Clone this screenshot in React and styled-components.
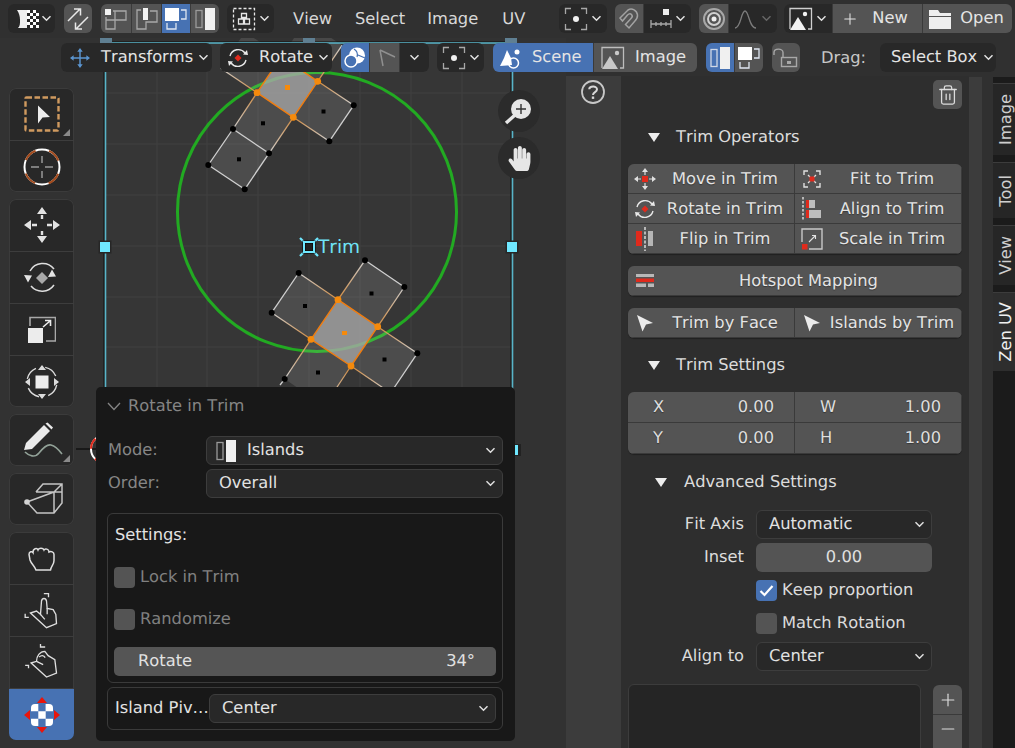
import styled, { createGlobalStyle } from 'styled-components';
import { Trash2, Plus, Minus } from 'lucide-react';
import { FaHandPaper } from 'react-icons/fa';

const Global = createGlobalStyle`
  html, body { margin: 0; padding: 0; background: #303030; }
  * { box-sizing: border-box; }
`;

const Root = styled.div`
  position: relative;
  width: 1015px;
  height: 748px;
  overflow: hidden;
  background: #303030;
  color: #e2e2e2;
  font-family: "DejaVu Sans", sans-serif;
  font-size: 16.3px;
  line-height: 1;
  text-rendering: geometricPrecision;
  font-kerning: none;
`;

const TopBar = styled.div`
  display: flex;
  align-items: flex-start;
  height: 38px;
  padding: 4px 0 0 8px;
  background: #303030;
`;

const SecondBar = styled.div`
  position: absolute;
  top: 43px;
  left: 61px;
  display: flex;
  align-items: flex-start;
  height: 29px;
  z-index: 3;
`;

const SegGroup = styled.div`
  display: flex;
  flex: none;
  height: 29px;
  margin-left: ${(p) => p.$ml || 0}px;
  border-radius: 6px;
  overflow: hidden;
  box-shadow: inset 0 0 0 1px rgba(70, 70, 70, 0.35);
`;

const toneColor = { dark: '#282828', gray: '#545454', blue: '#4772b3' };

const Seg = styled.div`
  display: flex;
  flex: none;
  align-items: center;
  justify-content: ${(p) => (p.$pl ? 'flex-start' : 'center')};
  gap: ${(p) => p.$gap || 0}px;
  width: ${(p) => p.$w}px;
  padding-left: ${(p) => p.$pl || 0}px;
  background: ${(p) => toneColor[p.$tone || 'dark']};
  color: #e4e4e4;
  & + & { border-left: 1px solid #3a3a3a; }
`;

const SegLabel = styled.span`
  margin-right: ${(p) => p.$mr || 0}px;
`;

const MenuItem = styled.span`
  flex: none;
  margin-left: ${(p) => p.$ml}px;
  padding-top: 7px;
  color: #d8d8d8;
`;

const DragLabel = styled.span`
  flex: none;
  margin: 7px 14px 0 21px;
  color: #c8c8c8;
`;

const Workspace = styled.div`
  display: flex;
  height: 710px;
`;

const Viewport = styled.div`
  position: relative;
  flex: none;
  width: 566px;
  background: #323232;
`;

const Canvas = styled.svg`
  position: absolute;
  inset: 0;
`;

const TrimLabel = styled.span`
  position: absolute;
  left: 318px;
  top: 201px;
  color: #6fe3f7;
  font-size: 18.5px;
`;

const NavGizmo = styled.div`
  position: absolute;
  left: 498px;
  top: ${(p) => p.$top}px;
  width: 42px;
  height: 42px;
  display: flex;
  align-items: center;
  justify-content: center;
  border-radius: 50%;
  background: #2b2b2b;
  color: #e6e6e6;
`;

const Toolbar = styled.div`
  position: absolute;
  left: 9px;
  top: 50px;
  display: flex;
  flex-direction: column;
  gap: 7px;
  width: 65px;
`;

const ToolGroup = styled.div`
  border-radius: 7px;
  overflow: hidden;
  background: #282828;
  box-shadow: inset 0 0 0 1px #3b3b3b;
`;

const ToolCell = styled.div`
  position: relative;
  display: flex;
  align-items: center;
  justify-content: center;
  height: 52px;
  background: ${(p) => (p.$active ? '#4772b3' : 'transparent')};
  & + & { border-top: 1px solid #3d3d3d; }
`;

const CornerMark = styled.span`
  position: absolute;
  right: 4px;
  bottom: 4px;
  width: 0;
  height: 0;
  border-left: 7px solid transparent;
  border-bottom: 7px solid #8a8a8a;
`;

const RedoPanel = styled.div`
  position: absolute;
  left: 96px;
  top: 349px;
  width: 419px;
  height: 354px;
  padding: 0 12px 0 11px;
  border-radius: 5px;
  background: #181818;
  z-index: 2;
`;

const RedoTitle = styled.div`
  display: flex;
  align-items: center;
  gap: 7px;
  height: 37px;
  padding-top: 1px;
  margin-bottom: 12px;
  color: #858585;
`;

const RedoRow = styled.div`
  display: flex;
  align-items: center;
  height: 29px;
  margin-bottom: 4px;
`;

const RedoLabel = styled.span`
  flex: none;
  width: 99px;
  padding-left: 1px;
  color: #868686;
`;

const SelectField = styled.div`
  display: flex;
  align-items: center;
  justify-content: space-between;
  flex: ${(p) => (p.$w ? 'none' : 1)};
  width: ${(p) => (p.$w ? `${p.$w}px` : 'auto')};
  height: 29px;
  padding: 0 6px 0 12px;
  border: 1px solid #3d3d3d;
  border-radius: 6px;
  background: #282828;
  color: #e2e2e2;
`;

const FieldValue = styled.span`
  display: flex;
  align-items: center;
  gap: 9px;
  margin-left: -5px;
`;

const BoxPanel = styled.div`
  margin-top: ${(p) => p.$mt || 0}px;
  padding: ${(p) => p.$pad};
  border: 1px solid #3a3a3a;
  border-radius: 6px;
`;

const BoxTitle = styled.div`
  height: 20px;
  margin: 0 0 22px 1px;
  padding-top: 2px;
`;

const CheckRow = styled.div`
  display: flex;
  align-items: center;
  gap: 5px;
  height: 21px;
  margin-bottom: ${(p) => p.$mb || 0}px;
  color: ${(p) => (p.$dim ? '#808080' : '#dcdcdc')};
`;

const CheckBox = styled.span`
  display: flex;
  align-items: center;
  justify-content: center;
  flex: none;
  width: 21px;
  height: 21px;
  border-radius: 4px;
  background: ${(p) => (p.$on ? '#4772b3' : '#545454')};
`;

const Slider = styled.div`
  display: flex;
  align-items: center;
  justify-content: space-between;
  height: 29px;
  padding: 0 21px 0 24px;
  border-radius: 5px;
  background: #555555;
  color: #e2e2e2;
`;

const PivotRow = styled.div`
  display: flex;
  align-items: center;
  justify-content: space-between;
`;

const HelpColumn = styled.div`
  flex: none;
  width: 55px;
  margin-top: 38px;
  padding: 3px 0 0 14px;
  background: #3c3c3c;
`;

const SidePanel = styled.div`
  flex: none;
  width: 348px;
  margin-top: 38px;
  padding: 4px 7px 0;
  background: #2e2e2e;
  overflow: hidden;
`;

const ScrollStrip = styled.div`
  flex: none;
  width: 13px;
  margin-top: 39px;
  background: #3c3c3c;
`;

const Gutter = styled.div`
  flex: none;
  width: 11px;
`;

const TabColumn = styled.div`
  flex: none;
  width: 22px;
  margin-top: 39px;
  padding-top: 6px;
  background: #1b1b1b;
`;

const Tab = styled.div`
  display: flex;
  align-items: center;
  justify-content: center;
  height: ${(p) => p.$h}px;
  margin-bottom: 7px;
  padding-left: 5px;
  border-top: 1px solid #3c3c3c;
  background: ${(p) => (p.$active ? '#2e2e2e' : '#262626')};
  color: ${(p) => (p.$active ? '#f0f0f0' : '#cfcfcf')};
  & > span {
    writing-mode: vertical-rl;
    transform: rotate(180deg);
  }
`;

const TrashRow = styled.div`
  display: flex;
  justify-content: flex-end;
  height: 29px;
`;

const SquareButton = styled.div`
  display: flex;
  align-items: center;
  justify-content: center;
  width: 29px;
  height: 29px;
  border-radius: 5px;
  background: #545454;
  color: #dcdcdc;
`;

const SectionHeader = styled.div`
  display: flex;
  align-items: center;
  gap: ${(p) => p.$gap || 15}px;
  height: 30px;
  margin-top: ${(p) => p.$mt}px;
  padding: 2px 0 0 ${(p) => p.$pl}px;
  color: #dcdcdc;
`;

const Triangle = styled.span`
  width: 0;
  height: 0;
  border-left: 6.5px solid transparent;
  border-right: 6.5px solid transparent;
  border-top: 9px solid #ededed;
`;

const ButtonGrid = styled.div`
  display: grid;
  grid-template-columns: ${(p) => (p.$single ? '1fr' : '167px 167px')};
  margin-top: ${(p) => p.$mt}px;
  border-radius: 6px;
  overflow: hidden;
  background: #3a3a3a;
  box-shadow: 0 1px 1px rgba(0, 0, 0, 0.3);
`;

const OpButton = styled.div`
  display: flex;
  align-items: center;
  height: 30px;
  padding: 0 2px 0 5px;
  background: #545454;
  color: #e4e4e4;
  text-shadow: 0 1px 1px rgba(0, 0, 0, 0.35);
  box-shadow: inset -1px -1px 0 #3a3a3a;
`;

const OpIcon = styled.span`
  display: flex;
  flex: none;
  align-items: center;
  justify-content: center;
  width: 24px;
`;

const OpText = styled.span`
  flex: 1;
  text-align: center;
`;

const NumberCell = styled.div`
  display: flex;
  align-items: center;
  justify-content: space-between;
  height: 31px;
  padding: 0 21px 0 25px;
  background: #545454;
  color: #dedede;
  text-shadow: 0 1px 1px rgba(0, 0, 0, 0.35);
  box-shadow: inset -1px -1px 0 #3a3a3a;
`;

const PropRow = styled.div`
  display: grid;
  grid-template-columns: 116px 176px;
  column-gap: 12px;
  align-items: center;
  margin-top: ${(p) => p.$mt}px;
  min-height: 20px;
`;

const PropLabel = styled.span`
  text-align: right;
  color: #dcdcdc;
`;

const NumberField = styled.div`
  height: 29px;
  line-height: 27px;
  border-radius: 6px;
  background: #545454;
  color: #e0e0e0;
  text-align: center;
`;

const ListArea = styled.div`
  display: flex;
  justify-content: space-between;
  margin-top: 13px;
`;

const ListBox = styled.div`
  width: 293px;
  height: 90px;
  border: 1px solid #3c3c3c;
  border-radius: 6px;
  background: #252525;
`;

const StackButtons = styled.div`
  width: 29px;
  margin-top: 1px;
  border-radius: 6px;
  overflow: hidden;
  background: #545454;
  color: #dcdcdc;
  & > div {
    display: flex;
    align-items: center;
    justify-content: center;
    height: 29px;
  }
  & > div + div { border-top: 1px solid #3a3a3a; }
`;

const W = '#e8e8e8';
const G = '#a8a8a8';
const R = '#e02a1c';

const Ico = ({ w = 24, h = 24, children }) => (
  <svg width={w} height={h} viewBox={`0 0 ${w} ${h}`} fill="none">{children}</svg>
);

const Chev = ({ c = '#e0e0e0' }) => (
  <svg width="11" height="7" viewBox="0 0 11 7" fill="none">
    <path d="M1.5 1.2l4 4 4-4" stroke={c} strokeWidth="1.5" />
  </svg>
);

const TitleChev = () => (
  <svg width="14" height="9" viewBox="0 0 14 9" fill="none">
    <path d="M1 1l6 6.5L13 1" stroke="#858585" strokeWidth="1.3" />
  </svg>
);

const checker = (x0, y0, size, n, m) => {
  const out = [];
  for (let i = 0; i < n; i++) {
    for (let j = 0; j < m; j++) {
      if ((i + j) % 2 === 0) out.push(<rect key={`${i}-${j}`} x={x0 + i * size} y={y0 + j * size} width={size} height={size} fill="#fff" />);
    }
  }
  return out;
};

const EditorIcon = () => (
  <Ico w={24} h={24}>
    <path d="M2 3h10v18H3c2-2 2-4 2-8s-1-7-3-10z" fill="#f0f0f0" />
    {checker(12, 3, 3, 4, 6)}
  </Ico>
);

const SyncIcon = () => (
  <Ico w={26} h={26}>
    <path d="M3 15L15 3M9 3h6.5v6.5M23 11L11 23M17 23h-6.5v-6.5" stroke={W} strokeWidth="1.5" />
  </Ico>
);

const VertMode = () => (
  <Ico w={24} h={24}>
    <rect x="1" y="2" width="6" height="6" fill="#f2f2f2" />
    <path d="M9 4h13v9H11v9H2V10M11 4v9H2" stroke={G} strokeWidth="1.3" />
  </Ico>
);
const EdgeMode = () => (
  <Ico w={24} h={24}>
    <rect x="8" y="1" width="5" height="12" fill="#f2f2f2" />
    <path d="M6 3H2v19h9v-7h11V4h-7" stroke={G} strokeWidth="1.3" />
  </Ico>
);
const FaceMode = () => (
  <Ico w={24} h={24}>
    <rect x="1" y="1" width="14" height="13" fill="#fff" />
    <path d="M17 3h5v9h-5M3 16v6h9v-6" stroke="#dfe6f2" strokeWidth="1.3" />
  </Ico>
);
const IslandMode = ({ gray }) => (
  <Ico w={24} h={24}>
    <rect x="3" y="3.5" width="6" height="17" stroke={gray ? '#9a9a9a' : '#d0d8e6'} strokeWidth="1.3" />
    <rect x="12" y="1" width="10" height="22" fill="#f0f0f0" />
  </Ico>
);

const StickyIcon = () => (
  <Ico w={24} h={24}>
    <rect x="1.5" y="1.5" width="21" height="21" stroke={W} strokeWidth="1.3" strokeDasharray="3 2" />
    <path d="M9.5 6.5h5v4h-5zM6.5 12h5v5h-5zM12.5 12h5v5h-5z" stroke={W} strokeWidth="1.3" />
  </Ico>
);

const PivotIcon = () => (
  <Ico w={24} h={24}>
    <path d="M1.5 7V1.5H7M17 1.5h5.5V7M22.5 17v5.5H17M7 22.5H1.5V17" stroke={G} strokeWidth="1.3" />
    <circle cx="12" cy="12" r="3" fill="#f0f0f0" />
  </Ico>
);

const MagnetIcon = () => (
  <Ico w={24} h={24}>
    <path d="M3 11l8-8c4-2.5 9 .5 9.5 5 .3 3-1.5 5-3 6.5L12 21l-3.5-3.5 5.5-6c1.5-1.5 1.5-3 .5-4s-2.5-1-4 .5l-5 6z" stroke="#a2a2a2" strokeWidth="1.5" />
  </Ico>
);

const IncrementIcon = () => (
  <Ico w={24} h={24}>
    <rect x="14" y="2" width="6" height="6" fill="#eee" />
    <path d="M2 13v8M22 13v8M2 17h20M7 15v4M12 15v4M17 15v4" stroke={G} strokeWidth="1.3" />
  </Ico>
);

const PropIcon = () => (
  <Ico w={24} h={24}>
    <circle cx="12" cy="12" r="10" stroke={G} strokeWidth="2" />
    <circle cx="12" cy="12" r="6" stroke="#cfcfcf" strokeWidth="2" />
    <circle cx="12" cy="12" r="2.5" fill="#eee" />
  </Ico>
);

const FalloffIcon = () => (
  <Ico w={24} h={24}>
    <path d="M1 21c6 0 6-17 10-17s4 17 11 17" stroke="#7c7c7c" strokeWidth="1.3" />
  </Ico>
);

const ImageIcon = ({ c = '#f2f2f2', frame = '#cfcfcf' }) => (
  <Ico w={24} h={24}>
    <path d="M1 22V1.5h21.5V22H19" stroke={frame} strokeWidth="1.3" />
    <path d="M1 23l8-13 8 13z" fill={c} />
    <circle cx="16" cy="7" r="2.2" fill={c} />
  </Ico>
);

const FolderIcon = () => (
  <Ico w={24} h={24}>
    <path d="M1 3h9l2 3h11v3H1z" fill="#eee" />
    <rect x="1" y="10" width="22" height="12" fill="#eee" />
  </Ico>
);

const TransformsIcon = () => (
  <svg width="20" height="20" viewBox="0 0 22 22" fill="none">
    <path d="M11 2v18M2 11h18" stroke="#5b95d0" strokeWidth="1.6" />
    <path d="M11 0l3 4H8zM11 22l3-4H8zM0 11l4-3v6zM22 11l-4-3v6z" fill="#5b95d0" />
  </svg>
);

const RotateTool = () => (
  <Ico w={24} h={24}>
    <path d="M4 10a8.5 8.5 0 0 1 15-3M20 14a8.5 8.5 0 0 1-15 3" stroke={W} strokeWidth="1.4" />
    <path d="M17 8.5l5 .5-1-5zM7 15.5l-5-.5 1 5z" fill={W} />
    <path d="M12 8.5l3.5 3.5-3.5 3.5L8.5 12z" fill={R} />
  </Ico>
);

const UvSyncIcon = () => (
  <Ico w={24} h={24}>
    <circle cx="14" cy="9.5" r="8" fill="#fff" />
    <path d="M11 3c3 2 4 5 3 8M15 9l7 3" stroke="#4772b3" strokeWidth="1.2" />
    <circle cx="8" cy="15" r="6" stroke="#fff" strokeWidth="1.5" fill="#4772b3" />
  </Ico>
);

const DimArrow = () => (
  <Ico w={22} h={22}>
    <path d="M6 3l3 16M6 3l15 7" stroke="#8f8f8f" strokeWidth="1.5" />
  </Ico>
);

const SceneIcon = () => (
  <Ico w={24} h={24}>
    <path d="M1 20l4-8 3-8 4 8 1 7z" fill="#fff" />
    <circle cx="18" cy="6" r="2.5" fill="#fff" />
    <circle cx="14.5" cy="17" r="5" stroke="#fff" strokeWidth="1.5" />
  </Ico>
);

const LockIcon = () => (
  <Ico w={26} h={24}>
    <path d="M1 9V6.5C1 2 10 2 10 6.5V11" stroke={G} strokeWidth="1.4" />
    <rect x="8.5" y="11.5" width="15" height="9" stroke={G} strokeWidth="1.4" />
    <rect x="14" y="15" width="4" height="3" fill={G} />
  </Ico>
);

const SelectBoxTool = () => (
  <Ico w={36} h={36}>
    <rect x="1.5" y="1.5" width="33" height="33" rx="1" stroke="#d09a5f" strokeWidth="2.4" strokeDasharray="5.5 2.5" />
    <path d="M14 9.5v18l4.5-6 7.5-.5z" fill="#ececec" />
  </Ico>
);

const CursorTool = () => (
  <Ico w={38} h={38}>
    <circle cx="19" cy="19" r="17.5" stroke="#fff" strokeWidth="2" />
    <circle cx="19" cy="19" r="17.5" stroke="#a34a1c" strokeWidth="2" strokeDasharray="13.7 13.7" strokeDashoffset="20.5" />
    <path d="M19 8v7M19 23v7M8 19h8M22 19h8" stroke="#999" strokeWidth="1.5" />
  </Ico>
);

const MoveTool = () => (
  <Ico w={38} h={38}>
    <path d="M19 1l5 7H14zM19 37l5-7H14zM1 19l7-5v10zM37 19l-7-5v10z" fill="#e2e2e2" />
    <path d="M19 9v4M19 25v4M9 19h5M24 19h5" stroke="#e2e2e2" strokeWidth="2.4" />
  </Ico>
);

const RotateBigTool = () => (
  <Ico w={38} h={38}>
    <path d="M7 12A14.5 14.5 0 0 1 31 10M31 26A14.5 14.5 0 0 1 8 27" stroke="#dedede" strokeWidth="1.5" />
    <path d="M25 18l8-.5-4-7zM1 16l8 .5-4 7z" fill="#e4e4e4" />
    <path d="M19 13l6 6-6 6-6-6z" fill="#a8a8a8" />
  </Ico>
);

const ScaleTool = () => (
  <Ico w={28} h={28}>
    <path d="M2 10V1.5h25.5V25H18" stroke="#a8a8a8" strokeWidth="1.6" />
    <rect x="0" y="12" width="15" height="15" fill="#ececec" />
    <path d="M15 11l7-6M17 4.5h5.5V10" stroke="#ececec" strokeWidth="1.6" />
  </Ico>
);

const TransformTool = () => (
  <Ico w={36} h={36}>
    <rect x="11.5" y="11.5" width="13" height="13" fill="#ececec" />
    <path d="M18 1l4 5h-8zM18 35l4-5h-8zM1 18l5-4v8zM35 18l-5-4v8z" fill="#dcdcdc" />
    <circle cx="18" cy="18" r="15" stroke="#dcdcdc" strokeWidth="1.4" strokeDasharray="14 9.5" strokeDashoffset="-3" />
  </Ico>
);

const AnnotateTool = () => (
  <Ico w={42} h={36}>
    <path d="M3 28l2-7L23 3l6 6-18 18z" fill="#eaeaea" />
    <path d="M24.5 1.5l2-1 5.5 5-1.5 2z" fill="#eaeaea" />
    <path d="M4 30c4 4 10 6 14 1s8-9 12-8 8 5 11 9" stroke="#92a298" strokeWidth="1.6" />
  </Ico>
);

const BoxTool = () => (
  <Ico w={44} h={36}>
    <path d="M16 11l7-8h19v19l-8 10H17L7 21M16 11h26M34 11v21M34 11l8-8M7 21l27-10" stroke="#c4c4c4" strokeWidth="1.5" />
    <circle cx="7" cy="21" r="2.8" fill="#d4d4d4" />
  </Ico>
);

const FistTool = () => (
  <Ico w={30} h={30}>
    <path d="M2 11.5c0-3 3-3.500 4-2 0-4 4-5 5-2.500 1-2.500 5-2.500 6 0 1-2 5-1 5 2 2-1 5 0 5 2.500v6c0 4-2.500 5-3.500 9.500H9C8 23.500 4 20.500 3 17z" stroke="#dedede" strokeWidth="1.5" />
  </Ico>
);

const PinchTool = () => (
  <svg width="37" height="40" viewBox="60 570 110 120" fill="none" stroke="#dedede" strokeWidth="4">
    <path d="M82 636l18-6 12 10 3-40c2-10 13-10 15 0l2 22 18 4 8 14 2 28-30 12z" />
    <path d="M112 640l13 15M132 622v18" />
    <path d="M122 578h14v11M66 638v11h11" />
  </svg>
);

const PinchAltTool = () => (
  <svg width="37" height="40" viewBox="60 730 110 120" fill="none" stroke="#dedede" strokeWidth="4">
    <path d="M84 790l16-5c0-15 10-30 25-30l10 13 20 12 5 40-30 12z" />
    <path d="M100 785l20 10M108 772c6-6 14-6 18 2" />
    <path d="M112 733v9h14M66 797h10v9" />
  </svg>
);

const GizmoTool = () => (
  <Ico w={40} h={40}>
    <path d="M20 2l5 6H15zM20 38l5-6H15zM2 20l6-5v10zM38 20l-6-5v10z" fill="#e8150c" />
    <rect x="9" y="9" width="22" height="22" rx="4" fill="#fff" />
    <path d="M16.300 9h7.300v7.300h-7.300zM9 16.300h7.300v7.400H9zM23.700 16.300H31v7.400h-7.300zM16.300 23.700h7.300V31h-7.300z" fill="#4772b3" />
  </Ico>
);

const ZoomGizmo = () => (
  <Ico w={30} h={30}>
    <circle cx="17" cy="13" r="10" fill="#e6e6e6" />
    <path d="M2 27l9-8" stroke="#e6e6e6" strokeWidth="3.4" />
    <path d="M17 8v10M12 13h10" stroke="#333" strokeWidth="1.4" />
  </Ico>
);

const OpMove = () => (
  <Ico w={22} h={22}>
    <path d="M11 0l3 4H8zM11 22l3-4H8zM0 11l4-3v6zM22 11l-4-3v6z" fill="#e0e0e0" />
    <path d="M11 4v3M11 15v3M4 11h3M15 11h3" stroke="#e0e0e0" strokeWidth="1.2" />
    <rect x="8" y="8" width="6" height="6" fill={R} />
  </Ico>
);
const OpFit = () => (
  <Ico w={18} h={18}>
    <path d="M1 5V1h4M17 5V1h-4M1 13v4h4M17 13v4h-4" stroke="#e0e0e0" strokeWidth="1.4" />
    <path d="M5 5l2 2M13 5l-2 2M5 13l2-2M13 13l-2-2" stroke="#e0e0e0" strokeWidth="1.2" />
    <rect x="6.500" y="6.500" width="5" height="5" fill={R} />
  </Ico>
);
const OpAlign = () => (
  <Ico w={22} h={24}>
    <path d="M2 0v24" stroke="#eee" strokeWidth="1.3" strokeDasharray="2.5 1.5" />
    <rect x="5" y="3" width="3" height="8" fill={R} />
    <rect x="8" y="3" width="6" height="8" fill="#bdbdbd" />
    <rect x="5" y="13" width="3" height="8" fill={R} />
    <rect x="8" y="13" width="12" height="8" fill="#bdbdbd" />
  </Ico>
);
const OpFlip = () => (
  <Ico w={20} h={24}>
    <rect x="1" y="4" width="6" height="15" fill={R} />
    <path d="M10 0v24" stroke="#eee" strokeWidth="1.3" strokeDasharray="3 1.5" />
    <rect x="13" y="4" width="5" height="15" fill="#b5b5b5" />
  </Ico>
);
const OpScale = () => (
  <Ico w={22} h={22}>
    <path d="M1 14V1h20v20H8" stroke="#c8c8c8" strokeWidth="1.4" />
    <rect x="1" y="16" width="5.500" height="5.500" fill={R} />
    <path d="M8 14l6-6M11 7.500h3.500V11" stroke="#e0e0e0" strokeWidth="1.1" />
  </Ico>
);
const OpHotspot = () => (
  <Ico w={20} h={16}>
    <rect x="1" y="1" width="18" height="3" fill="#b8b8b8" />
    <rect x="1" y="5.500" width="18" height="3.500" fill={R} />
    <rect x="1" y="10.500" width="10" height="3.500" fill="#b8b8b8" />
    <rect x="13" y="10.500" width="6" height="3.500" fill="#b8b8b8" />
  </Ico>
);
const OpArrow = () => (
  <Ico w={20} h={20}>
    <path d="M2 2l16 8-7 1.500-3.500 7z" fill="#ececec" />
  </Ico>
);

const HelpIcon = () => (
  <Ico w={26} h={26}>
    <circle cx="13" cy="13" r="11" stroke="#c8c8c8" strokeWidth="1.8" />
    <path d="M9.200 10.300C9.400 6.800 17 6.600 17 10.300c0 3-4 2.600-4 5.700" stroke="#d8d8d8" strokeWidth="2" />
    <rect x="11.800" y="17.500" width="2.400" height="2.400" fill="#d8d8d8" />
  </Ico>
);

const V = {
  o1: [257, 92.7], o2: [317.7, 81.3], o3: [293.3, 117.3], o4: [281.4, 56.7],
  b1: [353.7, 105.3], b2: [329.3, 141.3], b3: [233, 129], b4: [269, 153.3],
  b5: [208.3, 165], b6: [244.7, 189.3], t1: [220.7, 68.2], t2: [342, 45.3],
  t3: [245, 32], t4: [305.8, 20.7],
  p1: [338, 299.7], p2: [377.7, 326.7], p3: [351, 366], p4: [311, 339.3],
  a1: [404.3, 287], a2: [365, 260.3], c1: [271.7, 312.7], c2: [298.7, 273],
  d1: [417.3, 353.3], d2: [390.6, 393], e1: [284.7, 379], e2: [324.5, 406],
  f2: [280, 385],
};

const FACES = [
  ['o1', 'o3', 'b4', 'b3'], ['o2', 'b1', 'b2', 'o3'], ['b3', 'b4', 'b6', 'b5'],
  ['o1', 'o4', 't3', 't1'], ['o2', 't2', 't4', 'o4'],
  ['p1', 'a2', 'a1', 'p2'], ['p1', 'p4', 'c1', 'c2'], ['p2', 'd1', 'd2', 'p3'], ['p4', 'p3', 'e2', 'e1'],
];
const SEL_FACES = [['o1', 'o3', 'o2', 'o4'], ['p1', 'p2', 'p3', 'p4']];

const SEL_EDGES = [['o1', 'o3'], ['o3', 'o2'], ['o2', 'o4'], ['o4', 'o1'], ['p1', 'p2'], ['p2', 'p3'], ['p3', 'p4'], ['p4', 'p1']];
const HALF_EDGES = [
  ['o1', 'b3'], ['o3', 'b4'], ['o3', 'b2'], ['o2', 'b1'], ['o1', 't1'], ['o2', 't2'],
  ['p1', 'a2'], ['p2', 'a1'], ['p1', 'c2'], ['p4', 'c1'], ['p2', 'd1'], ['p3', 'd2'], ['p4', 'e1'], ['p3', 'e2'],
];
const PLAIN_EDGES = [
  ['b1', 'b2'], ['b3', 'b4'], ['b3', 'b5'], ['b5', 'b6'], ['b6', 'b4'],
  ['a2', 'a1'], ['c1', 'c2'], ['d1', 'd2'], ['e1', 'f2'],
];
const BLACK_VERTS = ['b1', 'b2', 'b3', 'b4', 'b5', 'b6', 'a1', 'a2', 'c1', 'c2', 'd1', 'e1'];
const ORANGE_VERTS = ['o1', 'o2', 'o3', 'p1', 'p2', 'p3', 'p4'];
const DOTS = [[263, 123.3], [323.5, 111.5], [239, 159.3], [305, 306], [371.5, 293.5], [384.5, 359.5], [318, 372.5]];
const GRID_X = [157, 207, 258, 309, 360, 411, 462];
const GRID_Y = [93, 144, 195, 246, 297, 347];

const pts = (f) => f.map((k) => V[k].join(',')).join(' ');

const UvCanvas = () => (
  <Canvas width="566" height="710" viewBox="0 38 566 710">
    <defs>
      {HALF_EDGES.map(([a, b]) => (
        <linearGradient key={a + b} id={`g-${a}-${b}`} gradientUnits="userSpaceOnUse" x1={V[a][0]} y1={V[a][1]} x2={V[b][0]} y2={V[b][1]}>
          <stop offset="0" stopColor="#d08a40" />
          <stop offset="1" stopColor="#d0d0d0" />
        </linearGradient>
      ))}
    </defs>
    <rect x="105" y="42" width="407" height="420" fill="#363636" />
    {GRID_X.map((x) => <line key={x} x1={x} x2={x} y1="42" y2="450" stroke="#414141" strokeWidth="1" />)}
    {GRID_Y.map((y) => <line key={y} x1="105" x2="512" y1={y} y2={y} stroke="#414141" strokeWidth="1" />)}
    <circle cx="317" cy="212" r="139.5" stroke="#22aa22" strokeWidth="3" fill="none" />
    {FACES.map((f) => <polygon key={f.join()} points={pts(f)} fill="rgba(255,255,255,0.11)" />)}
    {SEL_FACES.map((f) => <polygon key={f.join()} points={pts(f)} fill="rgba(170,170,170,0.78)" />)}
    {PLAIN_EDGES.map(([a, b]) => <line key={a + b} x1={V[a][0]} y1={V[a][1]} x2={V[b][0]} y2={V[b][1]} stroke="#d0d0d0" strokeWidth="1.3" />)}
    {HALF_EDGES.map(([a, b]) => <line key={a + b} x1={V[a][0]} y1={V[a][1]} x2={V[b][0]} y2={V[b][1]} stroke={`url(#g-${a}-${b})`} strokeWidth="1.3" />)}
    {SEL_EDGES.map(([a, b]) => <line key={a + b} x1={V[a][0]} y1={V[a][1]} x2={V[b][0]} y2={V[b][1]} stroke="#f07d10" strokeWidth="1.5" />)}
    {BLACK_VERTS.map((k) => <circle key={k} cx={V[k][0]} cy={V[k][1]} r="3" fill="#000" />)}
    {ORANGE_VERTS.map((k) => <circle key={k} cx={V[k][0]} cy={V[k][1]} r="3.4" fill="#f58a0c" />)}
    {DOTS.map(([x, y]) => <rect key={x} x={x - 2} y={y - 2} width="4" height="4" fill="#000" />)}
    <rect x="285" y="85" width="5" height="5" fill="#f58a0c" />
    <rect x="342" y="331" width="5" height="4" fill="#f58a0c" />

    <path d="M104 42V460M511 42V460M104 42H512" stroke="#111" strokeWidth="1" />
    <path d="M105.500 42V460M512.500 42V460M105 43H512" stroke="#58b4c8" strokeWidth="1.6" />
    {[[100, 38], [303, 38], [505, 38]].map(([x, y]) => <rect key={x} x={x} y={y} width="12" height="5" fill="#5f7f92" />)}
    {[[105, 247], [512, 247]].map(([x, y]) => (
      <g key={x}>
        <rect x={x - 6.5} y={y - 6.5} width="13" height="13" fill="#262626" />
        <rect x={x - 5} y={y - 5} width="10" height="10" fill="#6fe8ff" />
      </g>
    ))}
    <rect x="513" y="444" width="8" height="12" fill="#222" />
    <rect x="515" y="445" width="3" height="10" fill="#6fe8ff" />

    <path d="M76 449H104" stroke="#000" strokeWidth="1" />
    <circle cx="105" cy="449" r="14" stroke="#fff" strokeWidth="2" fill="none" />
    <circle cx="105" cy="449" r="14" stroke="#e02a1c" strokeWidth="2" fill="none" strokeDasharray="11 11" />

    <path d="M300 238l4 4M318 238l-4 4M300 256l4-4M318 256l-4-4" stroke="#6fe8ff" strokeWidth="2.2" />
    <rect x="302.500" y="240.500" width="13" height="13" fill="#000" />
    <rect x="304" y="242" width="10" height="10" fill="none" stroke="#6fe8ff" strokeWidth="2" />
    <rect x="305.500" y="243.500" width="7" height="7" fill="#222" />
  </Canvas>
);

const OPS = [
  ['Move in Trim', <OpMove key="a" />], ['Fit to Trim', <OpFit key="b" />],
  ['Rotate in Trim', <RotateTool key="c" />], ['Align to Trim', <OpAlign key="d" />],
  ['Flip in Trim', <OpFlip key="e" />], ['Scale in Trim', <OpScale key="f" />],
];

export default function App() {
  return (
    <Root>
      <Global />
      <TopBar>
        <SegGroup><Seg $w={47} $pl={7} $gap={2}><EditorIcon /><Chev /></Seg></SegGroup>
        <SegGroup $ml={9}><Seg $w={28} $tone="gray"><SyncIcon /></Seg></SegGroup>
        <SegGroup $ml={9}>
          <Seg $w={30} $tone="gray"><VertMode /></Seg>
          <Seg $w={30} $tone="gray"><EdgeMode /></Seg>
          <Seg $w={29} $tone="blue"><FaceMode /></Seg>
          <Seg $w={29} $tone="gray"><IslandMode gray /></Seg>
        </SegGroup>
        <SegGroup $ml={8}><Seg $w={47} $gap={3}><StickyIcon /><Chev /></Seg></SegGroup>
        <MenuItem $ml={19}>View</MenuItem>
        <MenuItem $ml={23}>Select</MenuItem>
        <MenuItem $ml={22}>Image</MenuItem>
        <MenuItem $ml={24}>UV</MenuItem>
        <SegGroup $ml={34}><Seg $w={48} $gap={3}><PivotIcon /><Chev /></Seg></SegGroup>
        <SegGroup $ml={8}>
          <Seg $w={28} $tone="gray"><MagnetIcon /></Seg>
          <Seg $w={48} $gap={2}><IncrementIcon /><Chev /></Seg>
        </SegGroup>
        <SegGroup $ml={8}>
          <Seg $w={29} $tone="gray"><PropIcon /></Seg>
          <Seg $w={49} $gap={3}><FalloffIcon /><Chev c="#666" /></Seg>
        </SegGroup>
        <SegGroup $ml={7}>
          <Seg $w={48} $gap={3}><ImageIcon /><Chev /></Seg>
          <Seg $w={90} $tone="gray" $pl={8} $gap={13}><Plus size={18} strokeWidth={1.4} />New</Seg>
          <Seg $w={90} $tone="gray" $pl={5} $gap={8}><FolderIcon />Open</Seg>
        </SegGroup>
      </TopBar>

      <SecondBar>
        <SegGroup><Seg $w={151} $pl={9} $gap={11}><TransformsIcon /><SegLabel $mr={-6}>Transforms</SegLabel><Chev /></Seg></SegGroup>
        <SegGroup $ml={8}><Seg $w={112} $pl={6} $gap={9}><RotateTool /><SegLabel $mr={-4}>Rotate</SegLabel><Chev /></Seg></SegGroup>
        <SegGroup $ml={9}>
          <Seg $w={28} $tone="blue"><UvSyncIcon /></Seg>
          <Seg $w={30} $tone="gray"><DimArrow /></Seg>
          <Seg $w={30}><Chev /></Seg>
        </SegGroup>
        <SegGroup $ml={8}><Seg $w={47} $gap={3}><PivotIcon /><Chev /></Seg></SegGroup>
        <SegGroup $ml={9}>
          <Seg $w={100} $tone="blue" $pl={6} $gap={9}><SceneIcon />Scene</Seg>
          <Seg $w={104} $tone="gray" $pl={7} $gap={10}><ImageIcon c="#c8c8c8" frame="#bdbdbd" />Image</Seg>
        </SegGroup>
        <SegGroup $ml={9}>
          <Seg $w={28} $tone="blue"><IslandMode /></Seg>
          <Seg $w={29} $tone="gray"><FaceMode /></Seg>
        </SegGroup>
        <SegGroup $ml={9}><Seg $w={28} $tone="gray"><LockIcon /></Seg></SegGroup>
        <DragLabel>Drag:</DragLabel>
        <SegGroup><Seg $w={116} $pl={11} $gap={6}>Select Box<Chev /></Seg></SegGroup>
      </SecondBar>

      <Workspace>
        <Viewport>
          <UvCanvas />
          <TrimLabel>Trim</TrimLabel>
          <NavGizmo $top={52}><ZoomGizmo /></NavGizmo>
          <NavGizmo $top={99}><FaHandPaper size={25} /></NavGizmo>

          <Toolbar>
            <ToolGroup>
              <ToolCell><SelectBoxTool /><CornerMark /></ToolCell>
              <ToolCell><CursorTool /></ToolCell>
            </ToolGroup>
            <ToolGroup>
              <ToolCell><MoveTool /></ToolCell>
              <ToolCell><RotateBigTool /></ToolCell>
              <ToolCell><ScaleTool /></ToolCell>
              <ToolCell><TransformTool /></ToolCell>
            </ToolGroup>
            <ToolGroup>
              <ToolCell><AnnotateTool /><CornerMark /></ToolCell>
            </ToolGroup>
            <ToolGroup>
              <ToolCell><BoxTool /></ToolCell>
            </ToolGroup>
            <ToolGroup>
              <ToolCell><FistTool /></ToolCell>
              <ToolCell><PinchTool /></ToolCell>
              <ToolCell><PinchAltTool /></ToolCell>
              <ToolCell $active><GizmoTool /></ToolCell>
            </ToolGroup>
          </Toolbar>

          <RedoPanel>
            <RedoTitle><TitleChev />Rotate in Trim</RedoTitle>
            <RedoRow>
              <RedoLabel>Mode:</RedoLabel>
              <SelectField><FieldValue><IslandMode gray />Islands</FieldValue><Chev /></SelectField>
            </RedoRow>
            <RedoRow>
              <RedoLabel>Order:</RedoLabel>
              <SelectField>Overall<Chev /></SelectField>
            </RedoRow>
            <BoxPanel $mt={15} $pad="11px 6px 6px 6px">
              <BoxTitle>Settings:</BoxTitle>
              <CheckRow $dim $mb={21}><CheckBox />Lock in Trim</CheckRow>
              <CheckRow $dim $mb={17}><CheckBox />Randomize</CheckRow>
              <Slider><span>Rotate</span><span>34°</span></Slider>
            </BoxPanel>
            <BoxPanel $mt={4} $pad="6px 6px 6px 7px">
              <PivotRow>
                <span>Island Piv…</span>
                <SelectField $w={287}>Center<Chev /></SelectField>
              </PivotRow>
            </BoxPanel>
          </RedoPanel>
        </Viewport>

        <HelpColumn><HelpIcon /></HelpColumn>

        <SidePanel>
          <TrashRow><SquareButton><Trash2 size={22} strokeWidth={1.4} /></SquareButton></TrashRow>
          <SectionHeader $mt={12} $pl={20} $gap={16}><Triangle />Trim Operators</SectionHeader>
          <ButtonGrid $mt={13}>
            {OPS.map(([label, icon]) => (
              <OpButton key={label}><OpIcon>{icon}</OpIcon><OpText>{label}</OpText></OpButton>
            ))}
          </ButtonGrid>
          <ButtonGrid $mt={12} $single>
            <OpButton><OpIcon><OpHotspot /></OpIcon><OpText>Hotspot Mapping</OpText></OpButton>
          </ButtonGrid>
          <ButtonGrid $mt={12}>
            <OpButton><OpIcon><OpArrow /></OpIcon><OpText>Trim by Face</OpText></OpButton>
            <OpButton><OpIcon><OpArrow /></OpIcon><OpText>Islands by Trim</OpText></OpButton>
          </ButtonGrid>
          <SectionHeader $mt={11} $pl={20} $gap={16}><Triangle />Trim Settings</SectionHeader>
          <ButtonGrid $mt={13}>
            <NumberCell><span>X</span><span>0.00</span></NumberCell>
            <NumberCell><span>W</span><span>1.00</span></NumberCell>
            <NumberCell><span>Y</span><span>0.00</span></NumberCell>
            <NumberCell><span>H</span><span>1.00</span></NumberCell>
          </ButtonGrid>
          <SectionHeader $mt={12} $pl={27} $gap={17}><Triangle />Advanced Settings</SectionHeader>
          <PropRow $mt={14}><PropLabel>Fit Axis</PropLabel><SelectField>Automatic<Chev /></SelectField></PropRow>
          <PropRow $mt={4}><PropLabel>Inset</PropLabel><NumberField>0.00</NumberField></PropRow>
          <PropRow $mt={8}>
            <span />
            <CheckRow>
              <CheckBox $on>
                <svg width="15" height="13" viewBox="0 0 15 13" fill="none"><path d="M1.5 7l4 4 8-9" stroke="#fff" strokeWidth="2.2" /></svg>
              </CheckBox>
              Keep proportion
            </CheckRow>
          </PropRow>
          <PropRow $mt={12}><span /><CheckRow><CheckBox />Match Rotation</CheckRow></PropRow>
          <PropRow $mt={8}><PropLabel>Align to</PropLabel><SelectField>Center<Chev /></SelectField></PropRow>
          <ListArea>
            <ListBox />
            <StackButtons>
              <div><Plus size={20} strokeWidth={1.4} /></div>
              <div><Minus size={20} strokeWidth={1.4} /></div>
            </StackButtons>
          </ListArea>
        </SidePanel>

        <ScrollStrip />
        <Gutter />
        <TabColumn>
          <Tab $h={72}><span>Image</span></Tab>
          <Tab $h={56}><span>Tool</span></Tab>
          <Tab $h={60}><span>View</span></Tab>
          <Tab $h={79} $active><span>Zen UV</span></Tab>
        </TabColumn>
      </Workspace>
    </Root>
  );
}
